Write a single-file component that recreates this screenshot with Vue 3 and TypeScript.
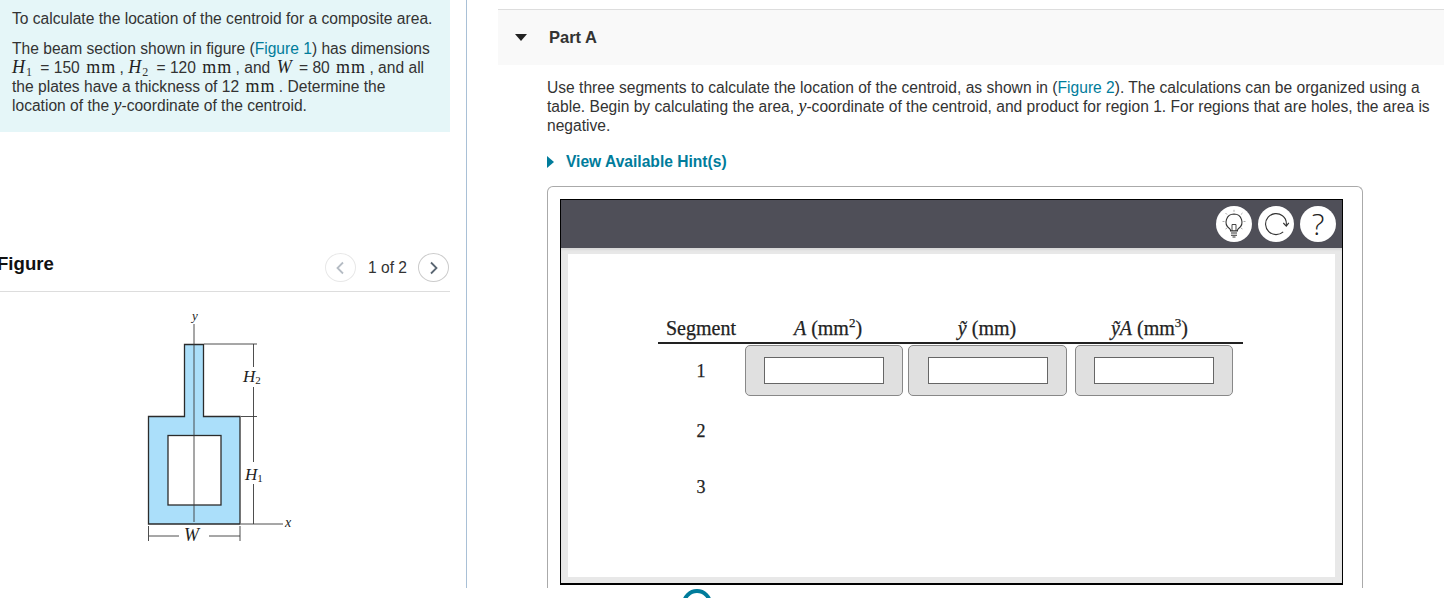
<script setup lang="ts">
const rows: string[] = ['1', '2', '3']
</script>

<template>
  <div class="page">
    <aside class="left">
      <section class="intro">
        <p class="first">To calculate the location of the centroid for a composite area.</p>
        <p>
          The beam section shown in figure (<a>Figure 1</a>) has dimensions<br />
          <i class="m">H</i><sub>1</sub> = 150 <span class="m u">mm</span> , <i class="m">H</i><sub>2</sub> = 120 <span class="m u">mm</span> , and <i class="m w">W</i> = 80 <span class="m u">mm</span> , and all<br />
          the plates have a thickness of 12 <span class="m u">mm</span> . Determine the<br />
          location of the <i class="m">y</i>-coordinate of the centroid.
        </p>
      </section>
      <header class="fig-head">
        <h2>Figure</h2>
        <div class="pager">
          <span class="circ off">
            <svg width="10" height="14" viewBox="0 0 10 14"><path d="M8 1.500 2.500 7 8 12.500" fill="none" stroke="#b5bcc4" stroke-width="1.800" /></svg>
          </span>
          <span class="count">1 of 2</span>
          <span class="circ">
            <svg width="10" height="14" viewBox="0 0 10 14"><path d="M2 1.500 7.500 7 2 12.500" fill="none" stroke="#5a6672" stroke-width="1.800" /></svg>
          </span>
        </div>
      </header>
      <svg class="beam" width="170" height="240" viewBox="130 310 170 240">
        <path d="M184.500 344.500H203.500V416.500H240V524H148.500V416.500H184.500Z" fill="#abdffa" stroke="#2b2b2b" stroke-width="1.300" />
        <rect x="168" y="435.500" width="53" height="69.500" fill="#fff" stroke="#2b2b2b" stroke-width="1.300" />
        <g stroke="#3a3a3a" stroke-width="0.900" fill="none">
          <path d="M194 324V522" />
          <path d="M204 344H257M241 416.500H257M241 524H283" />
          <path d="M253.500 344V367M253.500 387V462M253.500 484V524" />
          <path d="M148.500 526V541M240 526V541M149 536H179M209 536H240" />
        </g>
        <g class="fig-t">
          <text x="192" y="320" font-size="13">y</text>
          <text x="243" y="382" font-size="17">H<tspan font-size="11" dy="2" font-style="normal">2</tspan></text>
          <text x="245" y="480" font-size="17">H<tspan font-size="11" dy="2" font-style="normal">1</tspan></text>
          <text x="285" y="527" font-size="14">x</text>
          <text x="184" y="541" font-size="18">W</text>
        </g>
      </svg>
    </aside>

    <div class="rule"></div>

    <main class="right">
      <header class="part">
        <span class="tri-down"></span>
        <h3>Part A</h3>
      </header>
      <div class="body">
        <p class="desc">
          Use three segments to calculate the location of the centroid, as shown in (<a>Figure 2</a>). The calculations can be organized using a<br />
          table. Begin by calculating the area, <i class="m">y</i>-coordinate of the centroid, and product for region 1. For regions that are holes, the area is<br />
          negative.
        </p>
        <div class="hint"><span class="tri-right"></span><span>View Available Hint(s)</span></div>

        <div class="box">
          <div class="tool">
            <div class="bar">
              <span class="btn">
                <svg width="30" height="30" viewBox="0 2 30 30" fill="none" stroke="#333" stroke-width="1">
                  <path d="M15 7a8 8 0 0 0-4.600 14.500c.9.700 1.200 1.400 1.200 2.400h6.800c0-1 .3-1.700 1.200-2.400A8 8 0 0 0 15 7Z" stroke-width="1.100" />
                  <path d="M13 24v-6.500M17 24v-6.500M13 17.500h4" stroke-width=".9" />
                  <path d="M12 26h6M12 28.200h6M13.500 30h3" stroke-width="1.100" />
                  <path d="M15 2.800v2M6.500 6l1.600 1.600M23.500 6l-1.600 1.600M3.500 14.500h2M24.500 14.500h2M6.500 22l1.600-1M23.500 22l-1.600-1" stroke="#aaa" stroke-width="1" />
                </svg>
              </span>
              <span class="btn">
                <svg width="30" height="30" viewBox="0 0 30 30" fill="none" stroke="#333" stroke-width="1.100">
                  <path d="M22.200 22.800A10.500 10.500 0 1 1 21.500 6.800C24.300 8.800 25.700 12.200 25.300 16.500" />
                  <path d="M22.300 14 25.300 17.200 27.800 13.800" />
                </svg>
              </span>
              <span class="btn q">?</span>
            </div>
            <div class="well">
              <div class="sheet">
                <div class="thead">
                  <span class="c0">Segment</span>
                  <span class="c1"><i>A</i> (mm<sup>2</sup>)</span>
                  <span class="c2"><i>ỹ</i> (mm)</span>
                  <span class="c3"><i>ỹA</i> (mm<sup>3</sup>)</span>
                </div>
                <div v-for="(r, i) in rows" :key="r" class="trow" :class="'r' + i">
                  <span class="c0">{{ r }}</span>
                  <template v-if="i === 0">
                    <span class="cell w1"><span class="inp"></span></span>
                    <span class="cell w2"><span class="inp"></span></span>
                    <span class="cell w3"><span class="inp"></span></span>
                  </template>
                </div>
              </div>
            </div>
          </div>
        </div>
        <div class="ring"></div>
      </div>
    </main>
  </div>
</template>

<style>
html, body { margin: 0; overflow: hidden; background: #fff; }
</style>

<style scoped>
.page {
  display: flex;
  width: 1444px;
  height: 598px;
  overflow: hidden;
  font-family: "Liberation Sans", Arial, sans-serif;
  font-size: 15.600px;
  line-height: 19px;
  color: #333;
  background: #fff;
}
p { margin: 0; }
a { color: #007c9b; }
.m { font-family: "Liberation Serif", serif; font-size: 18px; line-height: 0; color: #222; }
.u { letter-spacing: 1px; margin: 0 -1px 0 2px; }
.w { margin: 0 3px 0 2px; }
sub { font-family: "Liberation Serif", serif; font-size: 12px; line-height: 0; vertical-align: -3px; margin: 0 4px 0 1px; }

.left { width: 450px; flex: none; }
.intro { height: 132px; box-sizing: border-box; padding: 9px 0 0 12px; background: #e5f6f8; white-space: nowrap; }
.first { margin-bottom: 11px; }
.fig-head { display: flex; align-items: center; justify-content: space-between; margin-top: 120px; height: 39px; border-bottom: 1px solid #ddd; }
h2 { margin: 0 0 0 -3px; font-size: 18.600px; font-weight: 700; color: #111; line-height: 22px; position: relative; top: -8px; }
.pager { display: flex; align-items: center; gap: 11px; margin-right: 1px; position: relative; top: -4px; }
.circ { width: 29px; height: 27px; border: 1px solid #ccc; border-radius: 50%; display: flex; align-items: center; justify-content: center; }
.circ.off { border-color: #e8e8e8; }
.count { font-size: 15.600px; margin-left: 1px; }
.beam { display: block; margin: 18px 0 0 130px; }
.fig-t { font-family: "Liberation Serif", serif; font-style: italic; fill: #222; }

.rule { width: 1px; height: 588px; margin-left: 16px; background: #a9c0d6; flex: none; }

.right { margin-left: 31px; flex: 1; min-width: 0; }
.part { display: flex; align-items: center; height: 55px; margin-top: 9px; border-top: 1px solid #ddd; background: #f9f9f9; }
.tri-down { width: 0; height: 0; margin-left: 17px; border: 6px solid transparent; border-top: 7px solid #222; border-bottom: 0; }
h3 { margin: 0 0 0 22px; font-size: 16.500px; font-weight: 700; color: #333; }
.body { padding: 13px 0 0 49px; white-space: nowrap; }
.desc { color: #333; }
.hint { display: flex; align-items: center; margin-top: 17px; font-weight: 700; color: #007c9b; height: 19px; }
.tri-right { width: 0; height: 0; margin-right: 12px; border: 6px solid transparent; border-left: 7px solid #007c9b; border-right: 0; }
.box { width: 816px; height: 402px; margin-top: 15px; box-sizing: border-box; padding: 12px 19px 0 12px; border: 1px solid #aaa; border-bottom: 0; border-radius: 6px 6px 0 0; }
.tool { height: 386px; box-sizing: border-box; border: 1px solid #000; border-width: 1px 1px 2px 1px; }
.bar { display: flex; justify-content: flex-end; align-items: center; gap: 6px; height: 48px; padding-right: 6px; background: #4f4f58; }
.btn { width: 36px; height: 36px; border-radius: 50%; background: #fff; display: flex; align-items: center; justify-content: center; color: #222; }
.q { font-family: "Open Sans", sans-serif; font-weight: 300; font-size: 30px; line-height: 36px; }
.well { height: 335px; box-sizing: border-box; padding: 6px 7px 8px 7px; background: #e8e8e8; box-shadow: inset 0 2px 2px #d8d8d8; }
.sheet { height: 323px; background: #fff; padding-left: 90px; box-sizing: border-box; font-family: "Liberation Serif", serif; font-size: 20px; color: #222; -webkit-text-stroke: 0.250px #222; }
.thead { display: flex; width: 585px; height: 90px; box-sizing: border-box; padding-top: 62px; border-bottom: 2px solid #222; line-height: 24px; }
.thead span { display: block; text-align: center; white-space: nowrap; }
.thead sup { font-size: 13px; line-height: 0; }
.thead .c0 { width: 86px; }
.thead .c1 { width: 168px; }
.thead .c2 { width: 150px; }
.thead .c3 { width: 175px; }
.trow { display: flex; width: 585px; }
.trow .c0 { width: 86px; text-align: center; line-height: 19px; font-size: 18px; }
.r0 { height: 62px; }
.r0 .c0 { padding-top: 18px; }
.r1 { height: 56px; }
.r2 { height: 40px; }
.r1 .c0, .r2 .c0 { padding-top: 16px; }
.cell { height: 51px; margin-top: 1px; box-sizing: border-box; background: #e0e0e0; border: 1px solid #888; border-radius: 5px; display: flex; align-items: center; justify-content: center; }
.w1 { width: 158px; margin-left: 1px; }
.w2 { width: 159px; margin-left: 5px; }
.w3 { width: 158px; margin-left: 8px; }
.inp { width: 120px; height: 27px; box-sizing: border-box; background: #fff; border: 1px solid #666; }

.ring { width: 30px; height: 30px; margin: 1px 0 0 135px; box-sizing: border-box; border: 4px solid #007c9b; border-radius: 50%; }
</style>
